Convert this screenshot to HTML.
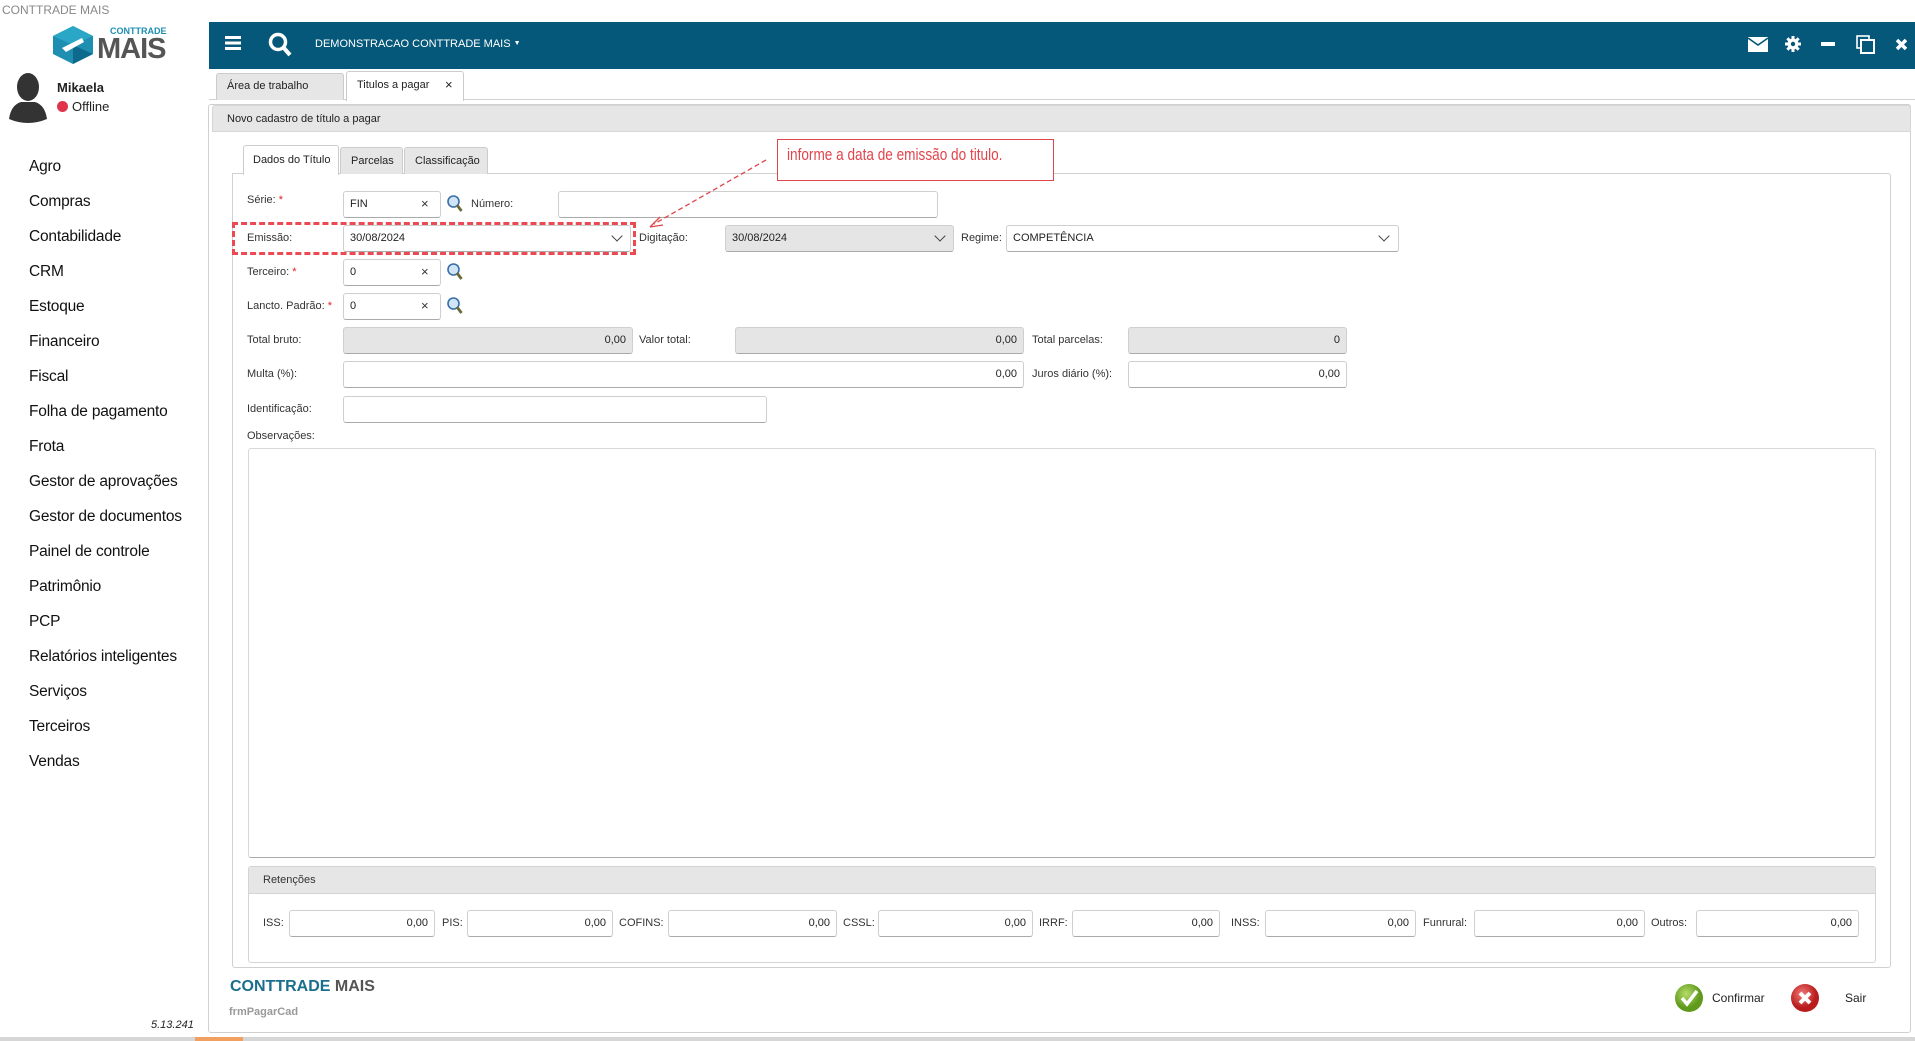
<!DOCTYPE html>
<html><head><meta charset="utf-8">
<style>
*{box-sizing:border-box;margin:0;padding:0}
body{width:1915px;height:1041px;position:relative;overflow:hidden;background:#fff;font-family:"Liberation Sans",sans-serif;font-size:11px;color:#222}
.a{position:absolute}
.menu{position:absolute;left:29px;font-size:15.5px;letter-spacing:-0.2px;color:#111}
.lbl{position:absolute;font-size:11px;color:#333}
.inp{position:absolute;height:27px;border:1px solid #cfcfcf;border-bottom:1px solid #aaa;border-radius:3px;background:#fff;font-size:11px;line-height:25px;padding:0 6px}
.g{background:#e5e5e5}
.r{text-align:right}
.req{color:#e02020}
.x{position:absolute;font-size:13px;color:#333}
.dd{position:absolute;width:8px;height:8px;border-right:1px solid #444;border-bottom:1px solid #444;transform:rotate(45deg)}
</style></head><body>
<div class="a" style="left:2px;top:3px;font-size:12px;color:#888">CONTTRADE MAIS</div>

<svg class="a" style="left:52px;top:26px" width="42" height="38" viewBox="0 0 42 38">
<polygon points="21,0 41,10 41,28 21,38 1,28 1,10" fill="#1e8fb0"/>
<polygon points="21,0 41,10 21,19 1,10" fill="#2aa6c6"/>
<polygon points="21,19 41,28 21,38" fill="#0d6a8c"/>
<path d="M10,22 L30,12 L32,16 L14,26 Z" fill="#fff"/>
</svg>
<div class="a" style="left:110px;top:26px;font-size:9px;font-weight:bold;color:#1c8eb0">CONTTRADE</div>
<div class="a" style="left:97px;top:33px;font-size:29px;font-weight:bold;color:#555;letter-spacing:-1px">MAIS</div>

<svg class="a" style="left:7px;top:73px" width="42" height="50" viewBox="0 0 42 50">
<ellipse cx="21" cy="14" rx="11" ry="14" fill="#333"/>
<path d="M2,46 Q4,32 14,29 L28,29 Q38,32 40,46 Q21,54 2,46Z" fill="#333"/>
</svg>
<div class="a" style="left:57px;top:80px;font-size:13px;font-weight:bold;color:#222">Mikaela</div>
<div class="a" style="left:57px;top:101px;width:11px;height:11px;border-radius:50%;background:#e0344a"></div>
<div class="a" style="left:72px;top:99px;font-size:13px;color:#222">Offline</div>

<div class="menu" style="top:158px">Agro</div>
<div class="menu" style="top:193px">Compras</div>
<div class="menu" style="top:228px">Contabilidade</div>
<div class="menu" style="top:263px">CRM</div>
<div class="menu" style="top:298px">Estoque</div>
<div class="menu" style="top:333px">Financeiro</div>
<div class="menu" style="top:368px">Fiscal</div>
<div class="menu" style="top:403px">Folha de pagamento</div>
<div class="menu" style="top:438px">Frota</div>
<div class="menu" style="top:473px">Gestor de aprovações</div>
<div class="menu" style="top:508px">Gestor de documentos</div>
<div class="menu" style="top:543px">Painel de controle</div>
<div class="menu" style="top:578px">Patrimônio</div>
<div class="menu" style="top:613px">PCP</div>
<div class="menu" style="top:648px">Relatórios inteligentes</div>
<div class="menu" style="top:683px">Serviços</div>
<div class="menu" style="top:718px">Terceiros</div>
<div class="menu" style="top:753px">Vendas</div>
<div class="a" style="left:151px;top:1019px;font-size:11px;font-style:italic;color:#222">5.13.241</div>

<div class="a" style="left:209px;top:22px;width:1706px;height:47px;background:#05587a"></div>
<svg class="a" style="left:225px;top:36px" width="16" height="14"><rect y="0" width="16" height="3" fill="#fff"/><rect y="5.5" width="16" height="3" fill="#fff"/><rect y="11" width="16" height="3" fill="#fff"/></svg>
<svg class="a" style="left:268px;top:32px" width="24" height="25"><circle cx="10" cy="10" r="7.5" stroke="#fff" stroke-width="3.5" fill="none"/><line x1="15" y1="15" x2="22" y2="23" stroke="#fff" stroke-width="4"/></svg>
<div class="a" style="left:315px;top:38px;font-size:11px;color:#fff">DEMONSTRACAO CONTTRADE MAIS <span style="font-size:7px;vertical-align:2px">▼</span></div>
<svg class="a" style="left:1748px;top:37px" width="20" height="15"><rect width="20" height="15" fill="#fff"/><path d="M0,1 L10,8 L20,1" stroke="#05587a" stroke-width="1.6" fill="none"/></svg>
<svg class="a" style="left:1785px;top:36px" width="16" height="16" viewBox="0 0 16 16"><g fill="#fff"><circle cx="8" cy="8" r="5.5"/><rect x="6.5" y="0" width="3" height="16"/><rect x="0" y="6.5" width="16" height="3"/><rect x="6.5" y="0" width="3" height="16" transform="rotate(45 8 8)"/><rect x="6.5" y="0" width="3" height="16" transform="rotate(-45 8 8)"/></g><circle cx="8" cy="8" r="2.2" fill="#05587a"/></svg>
<div class="a" style="left:1821px;top:42px;width:14px;height:4px;background:#fff"></div>
<svg class="a" style="left:1856px;top:35px" width="20" height="19"><rect x="1" y="1" width="12" height="12" fill="none" stroke="#fff" stroke-width="1.6"/><rect x="5" y="5" width="13" height="13" fill="#05587a" stroke="#fff" stroke-width="2"/></svg>
<svg class="a" style="left:1895px;top:38px" width="13" height="13"><path d="M2,2 L11,11 M11,2 L2,11" stroke="#fff" stroke-width="3.5"/></svg>

<div class="a" style="left:209px;top:99px;width:1706px;height:1px;background:#d0d0d0"></div>
<div class="a" style="left:216px;top:73px;width:128px;height:27px;background:#e6e6e6;border:1px solid #ccc;border-bottom:none;border-radius:3px 3px 0 0"></div>
<div class="a" style="left:227px;top:80px;font-size:11px">Área de trabalho</div>
<div class="a" style="left:346px;top:71px;width:118px;height:30px;background:#fff;border:1px solid #ccc;border-bottom:none;border-radius:3px 3px 0 0"></div>
<div class="a" style="left:357px;top:79px;font-size:11px">Titulos a pagar</div>
<div class="a" style="left:445px;top:77px;font-size:13px">×</div>

<div class="a" style="left:208px;top:104px;width:1703px;height:929px;border:1px solid #d0d0d0;border-radius:3px"></div>
<div class="a" style="left:212px;top:105px;width:1699px;height:27px;background:#e6e6e6;border:1px solid #d6d6d6;border-radius:3px 3px 0 0"></div>
<div class="a" style="left:227px;top:113px;font-size:11px">Novo cadastro de título a pagar</div>

<div class="a" style="left:232px;top:173px;width:1659px;height:795px;border:1px solid #d0d0d0;border-radius:0 3px 3px 3px"></div>
<div class="a" style="left:243px;top:145px;width:96px;height:30px;background:#fff;border:1px solid #ccc;border-bottom:none;border-radius:3px 3px 0 0"></div>
<div class="a" style="left:253px;top:154px;font-size:11px">Dados do Título</div>
<div class="a" style="left:340px;top:147px;width:63px;height:27px;background:#e6e6e6;border:1px solid #ccc;border-bottom:none;border-radius:3px 3px 0 0"></div>
<div class="a" style="left:351px;top:155px;font-size:11px">Parcelas</div>
<div class="a" style="left:404px;top:147px;width:84px;height:27px;background:#e6e6e6;border:1px solid #ccc;border-bottom:none;border-radius:3px 3px 0 0"></div>
<div class="a" style="left:415px;top:155px;font-size:11px">Classificação</div>

<div class="lbl" style="left:247px;top:194px">Série: <span class="req">*</span></div>
<div class="inp" style="left:343px;top:191px;width:98px">FIN</div><div class="x" style="left:421px;top:196px">×</div>
<svg class="a" style="left:447px;top:195px" width="16" height="18"><circle cx="6.5" cy="6.5" r="5.5" fill="#cfe4f7" stroke="#3a6fa8" stroke-width="1.6"/><line x1="10" y1="10" x2="14.5" y2="16" stroke="#6b6b3a" stroke-width="2.8"/></svg>
<div class="lbl" style="left:471px;top:198px">Número:</div>
<div class="inp" style="left:558px;top:191px;width:380px"></div>

<div class="lbl" style="left:247px;top:232px">Emissão:</div>
<div class="inp" style="left:343px;top:225px;width:288px">30/08/2024</div><div class="dd" style="left:613px;top:232px"></div>
<div class="lbl" style="left:639px;top:232px">Digitação:</div>
<div class="inp g" style="left:725px;top:225px;width:229px">30/08/2024</div><div class="dd" style="left:936px;top:232px"></div>
<div class="lbl" style="left:961px;top:232px">Regime:</div>
<div class="inp" style="left:1006px;top:225px;width:393px">COMPETÊNCIA</div><div class="dd" style="left:1380px;top:232px"></div>
<div class="a" style="left:232px;top:222px;width:404px;height:33px;border:3px dashed #ec4a52"></div>

<div class="lbl" style="left:247px;top:266px">Terceiro: <span class="req">*</span></div>
<div class="inp" style="left:343px;top:259px;width:98px">0</div><div class="x" style="left:421px;top:264px">×</div>
<svg class="a" style="left:447px;top:263px" width="16" height="18"><circle cx="6.5" cy="6.5" r="5.5" fill="#cfe4f7" stroke="#3a6fa8" stroke-width="1.6"/><line x1="10" y1="10" x2="14.5" y2="16" stroke="#6b6b3a" stroke-width="2.8"/></svg>

<div class="lbl" style="left:247px;top:300px">Lancto. Padrão: <span class="req">*</span></div>
<div class="inp" style="left:343px;top:293px;width:98px">0</div><div class="x" style="left:421px;top:298px">×</div>
<svg class="a" style="left:447px;top:297px" width="16" height="18"><circle cx="6.5" cy="6.5" r="5.5" fill="#cfe4f7" stroke="#3a6fa8" stroke-width="1.6"/><line x1="10" y1="10" x2="14.5" y2="16" stroke="#6b6b3a" stroke-width="2.8"/></svg>

<div class="lbl" style="left:247px;top:334px">Total bruto:</div>
<div class="inp g r" style="left:343px;top:327px;width:290px">0,00</div>
<div class="lbl" style="left:639px;top:334px">Valor total:</div>
<div class="inp g r" style="left:735px;top:327px;width:289px">0,00</div>
<div class="lbl" style="left:1032px;top:334px">Total parcelas:</div>
<div class="inp g r" style="left:1128px;top:327px;width:219px">0</div>

<div class="lbl" style="left:247px;top:368px">Multa (%):</div>
<div class="inp r" style="left:343px;top:361px;width:681px">0,00</div>
<div class="lbl" style="left:1032px;top:368px">Juros diário (%):</div>
<div class="inp r" style="left:1128px;top:361px;width:219px">0,00</div>

<div class="lbl" style="left:247px;top:403px">Identificação:</div>
<div class="inp" style="left:343px;top:396px;width:424px"></div>
<div class="lbl" style="left:247px;top:430px">Observações:</div>
<div class="a" style="left:248px;top:448px;width:1628px;height:410px;border:1px solid #d8d8d8;border-bottom:1px solid #aaa;border-radius:3px"></div>

<div class="a" style="left:248px;top:866px;width:1628px;height:97px;border:1px solid #d4d4d4;border-radius:3px"></div>
<div class="a" style="left:249px;top:867px;width:1626px;height:27px;background:#e6e6e6;border-bottom:1px solid #d4d4d4"></div>
<div class="lbl" style="left:263px;top:874px">Retenções</div>
<div class="lbl" style="left:263px;top:917px">ISS:</div><div class="inp r" style="left:289px;top:910px;width:146px">0,00</div>
<div class="lbl" style="left:442px;top:917px">PIS:</div><div class="inp r" style="left:467px;top:910px;width:146px">0,00</div>
<div class="lbl" style="left:619px;top:917px">COFINS:</div><div class="inp r" style="left:668px;top:910px;width:169px">0,00</div>
<div class="lbl" style="left:843px;top:917px">CSSL:</div><div class="inp r" style="left:878px;top:910px;width:155px">0,00</div>
<div class="lbl" style="left:1039px;top:917px">IRRF:</div><div class="inp r" style="left:1072px;top:910px;width:148px">0,00</div>
<div class="lbl" style="left:1231px;top:917px">INSS:</div><div class="inp r" style="left:1265px;top:910px;width:151px">0,00</div>
<div class="lbl" style="left:1423px;top:917px">Funrural:</div><div class="inp r" style="left:1474px;top:910px;width:171px">0,00</div>
<div class="lbl" style="left:1651px;top:917px">Outros:</div><div class="inp r" style="left:1696px;top:910px;width:163px">0,00</div>

<div class="a" style="left:230px;top:978px;font-size:16px;font-weight:bold;color:#1a6f8c">CONTTRADE <span style="color:#555">MAIS</span></div>
<div class="a" style="left:229px;top:1006px;font-size:11px;font-weight:bold;color:#999">frmPagarCad</div>
<svg class="a" style="left:1674px;top:983px" width="30" height="30"><defs><radialGradient id="gg" cx="40%" cy="35%"><stop offset="0" stop-color="#b6dc6a"/><stop offset="1" stop-color="#5f9a1c"/></radialGradient><radialGradient id="rg" cx="40%" cy="35%"><stop offset="0" stop-color="#f07a78"/><stop offset="1" stop-color="#b81c1c"/></radialGradient></defs><circle cx="15" cy="15" r="14" fill="url(#gg)"/><path d="M8,15 L13,21 L23,8" stroke="#fff" stroke-width="3.5" fill="none"/></svg>
<div class="a" style="left:1712px;top:991px;font-size:12px">Confirmar</div>
<svg class="a" style="left:1790px;top:983px" width="30" height="30"><circle cx="15" cy="15" r="14" fill="url(#rg)"/><path d="M10,10 L20,20 M20,10 L10,20" stroke="#fff" stroke-width="4"/></svg>
<div class="a" style="left:1845px;top:991px;font-size:12px">Sair</div>

<div class="a" style="left:0;top:1037px;width:1915px;height:4px;background:#d6d6d6"></div>
<div class="a" style="left:195px;top:1037px;width:48px;height:4px;background:#f0a060"></div>

<div class="a" style="left:777px;top:139px;width:277px;height:42px;border:1.5px solid #e0454c;background:#fff"></div>
<div class="a" style="left:787px;top:145px;font-size:17px;color:#e0454c;transform:scaleX(0.8);transform-origin:left">informe a data de emissão do titulo.</div>
<svg class="a" style="left:640px;top:150px" width="140" height="85"><path d="M126,10 L14,74" stroke="#e0454c" stroke-width="1.3" stroke-dasharray="5,3"/><path d="M10,77 L20,67 M10,77 L23,75" stroke="#e0454c" stroke-width="1.3"/></svg>
</body></html>
